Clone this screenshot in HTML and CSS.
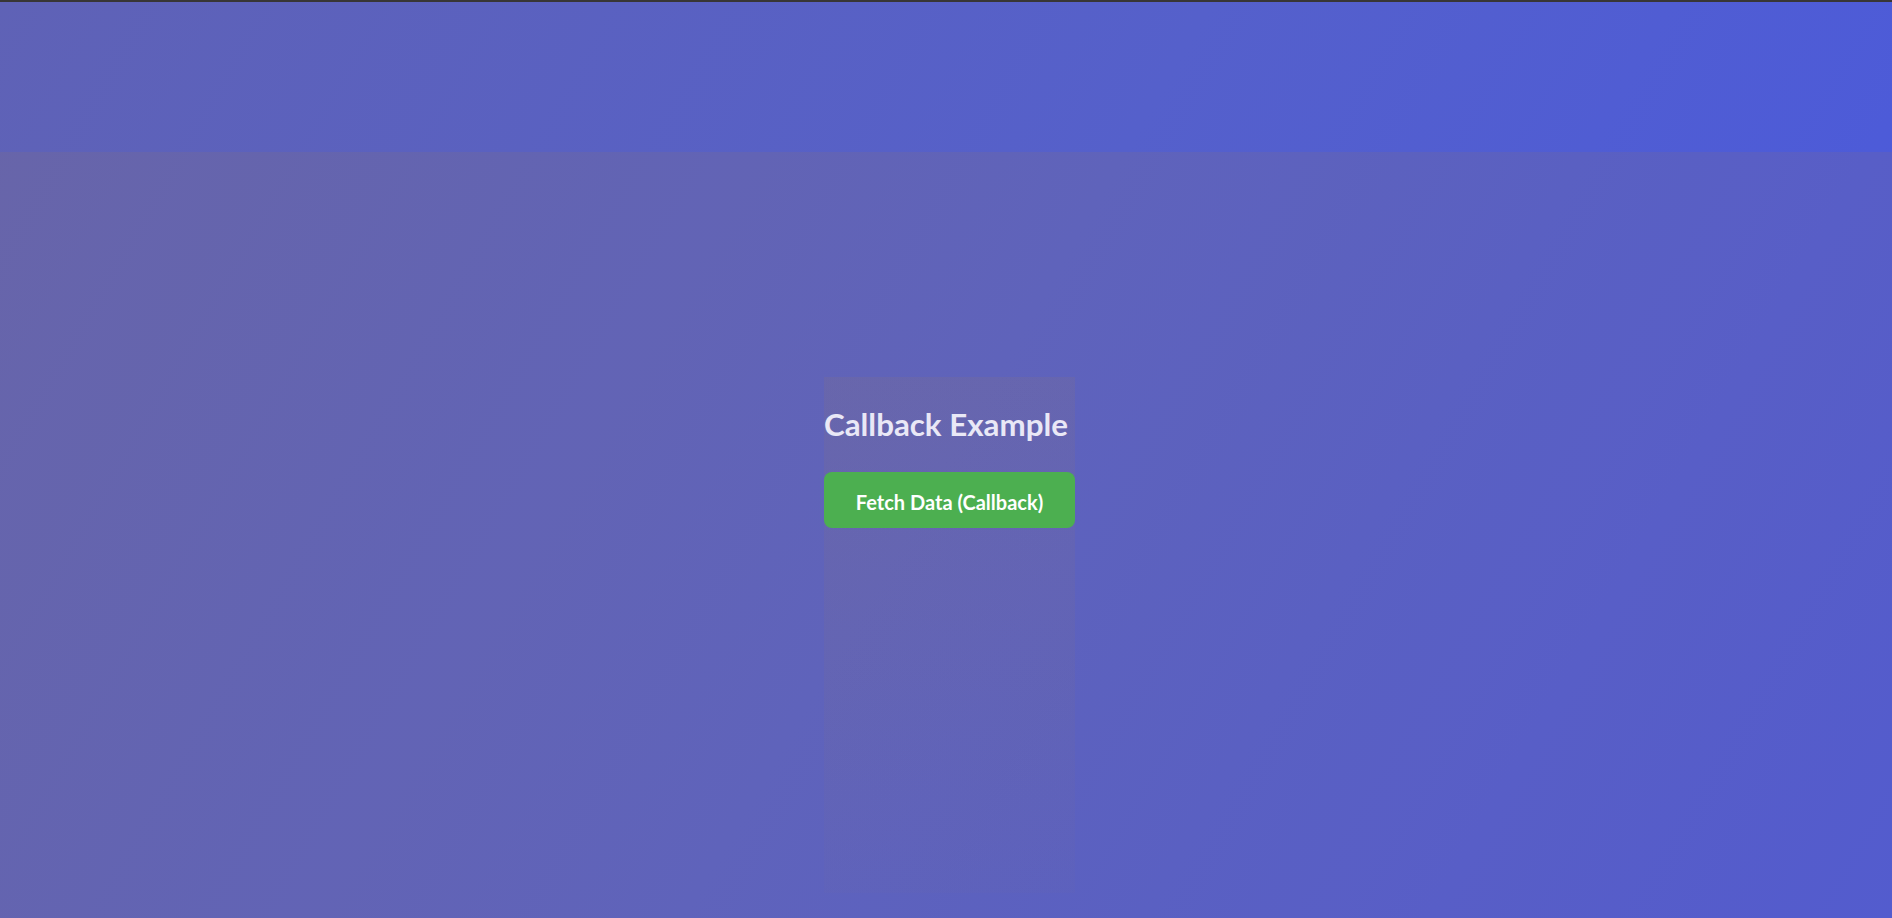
FILE: index.html
```html
<!DOCTYPE html>
<html lang="en">
<head>
<meta charset="utf-8">
<title>Callback Example</title>
<link rel="stylesheet" href="styles.css">
</head>
<body>
<div class="topline"></div>
<header class="header"></header>
<main class="main">
  <section class="card">
    <h1 class="title">Callback Example</h1>
    <button class="fetch-btn" type="button">Fetch Data (Callback)</button>
  </section>
</main>
</body>
</html>
```
FILE: styles.css
```css
html, body {
  margin: 0;
  padding: 0;
  height: 100%;
}
body {
  min-height: 918px;
  display: flex;
  flex-direction: column;
  font-family: Lato, "Noto Sans", "Liberation Sans", sans-serif;
  background: linear-gradient(120deg, #5f62b6 0%, #5560cb 50%, #4858e0 100%);
  overflow: hidden;
}
.topline {
  height: 2px;
  background: #383636;
  flex: none;
}
.header {
  height: 150px;
  flex: none;
}
.main {
  flex: 1;
  display: flex;
  justify-content: center;
  align-items: flex-start;
  padding-top: 225px;
  padding-left: 7px;
  background: rgba(182, 130, 48, 0.1);
}
.card {
  width: 251px;
  height: 516px;
  background: linear-gradient(180deg, rgba(182, 130, 48, 0.09) 0%, rgba(182, 130, 48, 0.05) 60%, rgba(182, 130, 48, 0.02) 100%);
  display: flex;
  flex-direction: column;
}
.title {
  margin: 27px 0 0;
  font-size: 31.3px;
  line-height: 40px;
  font-weight: 700;
  color: #e9e8f6;
  white-space: nowrap;
}
.fetch-btn {
  margin-top: 28px;
  height: 56px;
  width: 100%;
  border: none;
  border-radius: 8px;
  background: #4caf50;
  color: #ffffff;
  font-family: inherit;
  font-size: 20px;
  font-weight: 700;
  padding: 3px 30px 0;
  cursor: pointer;
}
```
